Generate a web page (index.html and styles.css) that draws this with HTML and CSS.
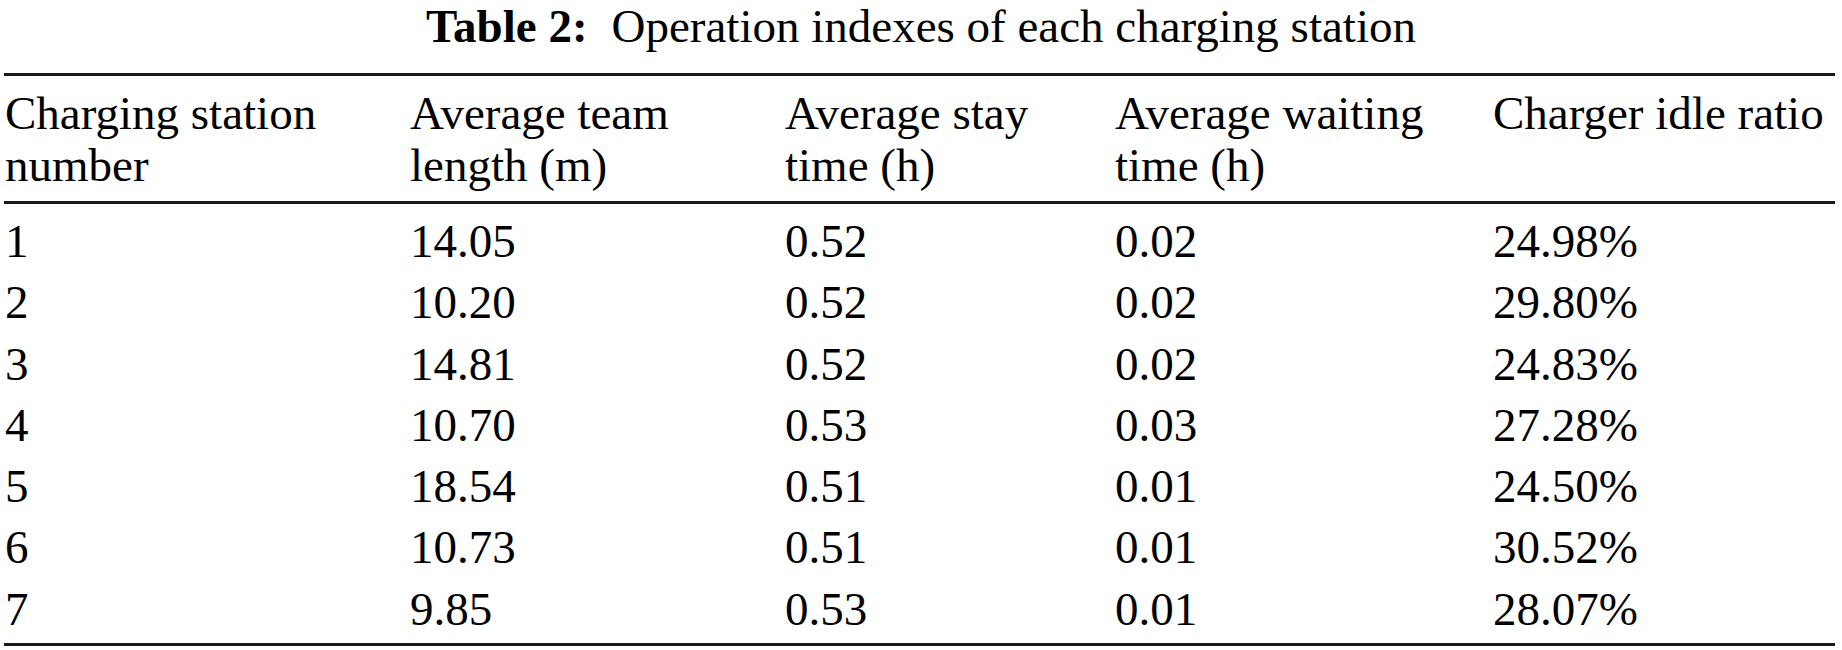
FILE: index.html
```html
<!DOCTYPE html>
<html lang="en">
<head>
<meta charset="utf-8">
<title>Table 2: Operation indexes of each charging station</title>
<link rel="stylesheet" href="styles.css">
</head>
<body>
<div class="page">
  <div class="caption"><span class="caption-label">Table 2:</span><span class="caption-text">Operation indexes of each charging station</span></div>
  <table class="data-table">
    <colgroup>
      <col class="c1"><col class="c2"><col class="c3"><col class="c4"><col class="c5">
    </colgroup>
    <thead>
      <tr>
        <th>Charging station<br>number</th>
        <th>Average team<br>length (m)</th>
        <th>Average stay<br>time (h)</th>
        <th>Average waiting<br>time (h)</th>
        <th class="nowrap">Charger idle ratio</th>
      </tr>
    </thead>
    <tbody>
      <tr><td>1</td><td>14.05</td><td>0.52</td><td>0.02</td><td>24.98%</td></tr>
      <tr><td>2</td><td>10.20</td><td>0.52</td><td>0.02</td><td>29.80%</td></tr>
      <tr><td>3</td><td>14.81</td><td>0.52</td><td>0.02</td><td>24.83%</td></tr>
      <tr><td>4</td><td>10.70</td><td>0.53</td><td>0.03</td><td>27.28%</td></tr>
      <tr><td>5</td><td>18.54</td><td>0.51</td><td>0.01</td><td>24.50%</td></tr>
      <tr><td>6</td><td>10.73</td><td>0.51</td><td>0.01</td><td>30.52%</td></tr>
      <tr><td>7</td><td>9.85</td><td>0.53</td><td>0.01</td><td>28.07%</td></tr>
    </tbody>
  </table>
</div>
</body>
</html>
```
FILE: styles.css
```css
html, body {
  margin: 0;
  padding: 0;
  background: #ffffff;
}

body {
  width: 1842px;
  height: 650px;
  overflow: hidden;
  font-family: "Liberation Serif", "Times New Roman", serif;
  font-size: 47px;
  color: #000000;
}

.page {
  display: flex;
  flex-direction: column;
}

.caption {
  text-align: center;
  line-height: 53px;
  margin-bottom: 20px;
  white-space: nowrap;
}

.caption-label {
  font-weight: bold;
  margin-right: 24px;
}

.data-table {
  margin-left: 4px;
  width: 1831px;
  border-collapse: collapse;
  table-layout: fixed;
  border-top: 3px solid #1a1a1a;
  border-bottom: 3px solid #1a1a1a;
}

.c1 { width: 405px; }
.c2 { width: 375px; }
.c3 { width: 330px; }
.c4 { width: 378px; }
.c5 { width: 343px; }

.data-table th {
  font-weight: normal;
  text-align: left;
  vertical-align: top;
  line-height: 52px;
  padding: 11px 0 10px 1px;
  border-bottom: 3px solid #1a1a1a;
}

.data-table th.nowrap {
  white-space: nowrap;
  overflow: visible;
}

.data-table td {
  line-height: 61.3px;
  padding: 0 0 0 1px;
  white-space: nowrap;
}

.data-table tbody tr:first-child td {
  padding-top: 7px;
}

.data-table tbody tr:last-child td {
  padding-bottom: 3px;
}
```
